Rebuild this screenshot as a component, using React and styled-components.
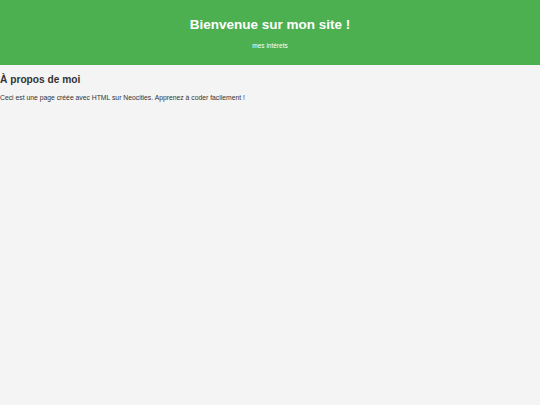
import React from "react";
import styled, { createGlobalStyle } from "styled-components";

const GlobalStyle = createGlobalStyle`
  html, body {
    margin: 0;
    padding: 0;
    background: #f4f4f4;
    font-family: "Liberation Sans", Arial, sans-serif;
    color: #333;
  }
`;

const Header = styled.header`
  background: #4caf50;
  color: #fff;
  text-align: center;
  height: 65px;
  box-sizing: border-box;
  padding-top: 16px;
`;

const Title = styled.h1`
  margin: 0;
  font-size: 13.5px;
  font-weight: bold;
  line-height: 18px;
`;

const Nav = styled.nav`
  margin-top: 7px;
  font-size: 6.5px;
  line-height: 9px;
`;

const NavLink = styled.a`
  color: #fff;
  text-decoration: none;
`;

const Section = styled.section`
  padding: 8px 0 0;
`;

const Heading = styled.h2`
  margin: 0 0 7px;
  font-size: 10.2px;
  line-height: 13px;
  color: #333;
`;

const Text = styled.p`
  margin: 0;
  font-size: 6.8px;
  line-height: 9px;
  color: #333;
`;

export default function App() {
  return (
    <>
      <GlobalStyle />
      <Header>
        <Title>Bienvenue sur mon site !</Title>
        <Nav>
          <NavLink href="#">mes intérets</NavLink>
        </Nav>
      </Header>
      <Section>
        <Heading>À propos de moi</Heading>
        <Text>
          Ceci est une page créée avec HTML sur Neocities. Apprenez à coder
          facilement !
        </Text>
      </Section>
    </>
  );
}
